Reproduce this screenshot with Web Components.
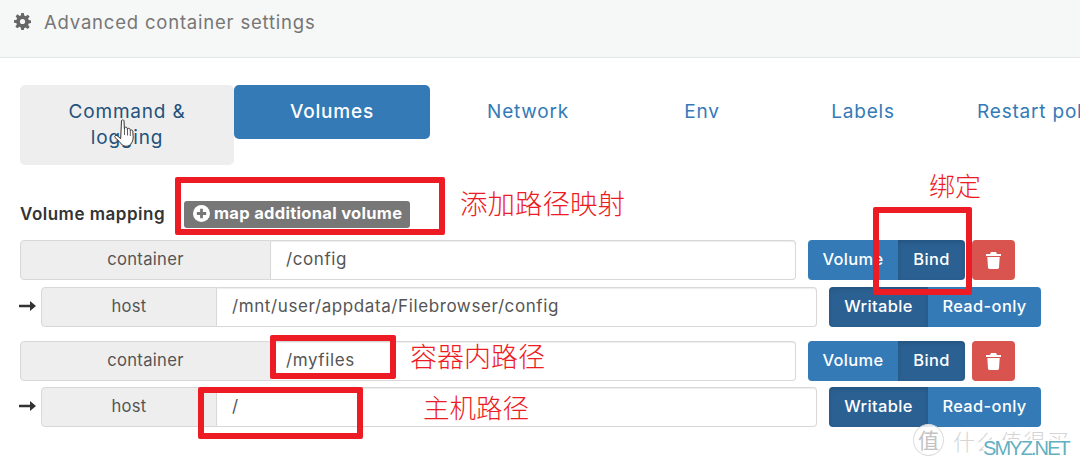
<!DOCTYPE html>
<html lang="en">
<head>
<meta charset="utf-8">
<title>Advanced container settings</title>
<style>
  html, body { margin: 0; padding: 0; background: #fff; overflow: hidden; height: 467px; }
  body { position: relative; font-family: Inter, "Noto Sans", sans-serif; }
</style>
</head>
<body>
<app-header>Advanced container settings</app-header>

<tab-bar>
  <nav-tab w="214" state="hover">Command &amp; logging</nav-tab>
  <nav-tab w="196" state="active">Volumes</nav-tab>
  <nav-tab w="196">Network</nav-tab>
  <nav-tab w="152">Env</nav-tab>
  <nav-tab w="170">Labels</nav-tab>
  <nav-tab w="132" state="clip">Restart policy</nav-tab>
</tab-bar>

<volume-toolbar>Volume mapping</volume-toolbar>

<volume-pair path="/config" host="/mnt/user/appdata/Filebrowser/config"></volume-pair>
<volume-pair path="/myfiles" host="/" gap="14" inner="6"></volume-pair>

<!-- anotaciones rojas encima de la captura -->
<red-box x="175" y="177" w="270" h="58"></red-box>
<red-box x="873" y="207" w="99" h="88"></red-box>
<red-box x="270" y="335" w="126" h="44"></red-box>
<red-box x="198" y="387" w="165" h="52"></red-box>
<red-note x="460" y="184" size="27.500">添加路径映射</red-note>
<red-note x="929" y="167" size="26">绑定</red-note>
<red-note x="410" y="338" size="27">容器内路径</red-note>
<red-note x="423" y="389" size="26.500">主机路径</red-note>

<hand-cursor></hand-cursor>
<site-mark></site-mark>

<script>
// Cabecera con el icono de engranaje
class AppHeader extends HTMLElement {
  constructor() {
    super();
    this.attachShadow({ mode: "open" });
  }
  connectedCallback() {
    this.shadowRoot.innerHTML = `
    <style>
      :host {
        display: flex; align-items: center; height: 43px; padding: 0 0 14px 14px;
        background: #f6f7f7; border-bottom: 1px solid #e6e9e9;
        gap: 13px; color: #767676; margin-bottom: 27px;
        font: 400 18.500px Inter, sans-serif; letter-spacing: .8px;
      }
      svg { width: 17px; height: 17px; flex: none; }
    </style>
    <svg viewBox="-1 -1 26 26"><path fill="#666" fill-rule="evenodd" d="M10 -1h4l.7 3.900 2.100.9 3.200-2.300 2.900 2.900-2.300 3.200.9 2.100 3.900.7v4l-3.900.7-.9 2.100 2.300 3.200-2.900 2.900-3.200-2.300-2.100.9L14 25h-4l-.7-3.900-2.100-.9-3.200 2.300-2.900-2.900 2.300-3.200-.9-2.100L-1 14v-4l3.900-.7.9-2.100-2.300-3.200 2.900-2.900 3.200 2.300 2.100-.9zM12 8a4 4 0 1 0 0 8 4 4 0 0 0 0-8z"/></svg>
    <slot></slot>`;
  }
}
customElements.define("app-header", AppHeader);

class TabBar extends HTMLElement {
  constructor() {
    super();
    this.attachShadow({ mode: "open" });
  }
  connectedCallback() {
    this.shadowRoot.innerHTML = `
    <style>
      :host { display: flex; align-items: flex-start; height: 80px; padding-left: 20px; overflow: hidden; }
    </style>
    <slot></slot>`;
  }
}
customElements.define("tab-bar", TabBar);

class NavTab extends HTMLElement {
  constructor() {
    super();
    this.attachShadow({ mode: "open" });
  }
  connectedCallback() {
    const w = this.getAttribute("w");
    this.shadowRoot.innerHTML = `
    <style>
      :host {
        display: block; flex: none; box-sizing: border-box; width: ${w}px;
        padding: 14px 20px; border-radius: 5px; text-align: center;
        font: 400 19px/26px Inter, sans-serif; letter-spacing: .8px; color: #337ab7;
      }
      :host([state="hover"]) { background: #eee; color: #23527c; padding-left: 40px; padding-right: 40px; }
      :host([state="active"]) { background: #337ab7; color: #fff; font-weight: 500; }
      :host([state="clip"]) { text-align: left; white-space: nowrap; padding: 14px 0 14px 29px; overflow: hidden; }
    </style>
    <slot></slot>`;
  }
}
customElements.define("nav-tab", NavTab);

class VolumeToolbar extends HTMLElement {
  constructor() {
    super();
    this.attachShadow({ mode: "open" });
  }
  connectedCallback() {
    this.shadowRoot.innerHTML = `
    <style>
      :host {
        display: flex; align-items: center; height: 27px;
        margin: 36px 0 12px 20px; color: #333;
        font: 600 17px Inter, sans-serif; letter-spacing: .5px;
      }
      .label { display: block; width: 164px; flex: none; padding-bottom: 2px; }
      .add {
        display: flex; align-items: center; gap: 4px; box-sizing: border-box;
        width: 226px; height: 27px; padding: 0 0 3px 9px;
        background: #777; color: #fff; border-radius: 3px;
        font: 700 16.500px Inter, sans-serif; letter-spacing: .3px; white-space: nowrap;
      }
      svg { width: 17px; height: 17px; flex: none; }
    </style>
    <span class="label"><slot></slot></span>
    <span class="add">
      <svg viewBox="0 0 16 16"><circle cx="8" cy="8" r="8" fill="#fff"/><path d="M3.600 8h8.800M8 3.600v8.800" stroke="#777" stroke-width="2.600"/></svg>
      map additional volume
    </span>`;
  }
}
customElements.define("volume-toolbar", VolumeToolbar);

// Dos filas: ruta del contenedor y ruta del host
class VolumePair extends HTMLElement {
  constructor() {
    super();
    this.attachShadow({ mode: "open" });
  }
  connectedCallback() {
    const path = this.getAttribute("path");
    const host = this.getAttribute("host");
    const gap = this.getAttribute("gap") || 0;
    const inner = this.getAttribute("inner") || 7;
    this.shadowRoot.innerHTML = `
    <style>
      :host { display: block; margin-top: ${gap}px; font: 400 16.600px Inter, sans-serif; letter-spacing: .3px; }
      .row { display: flex; align-items: stretch; height: 40px; padding-left: 20px; }
      .row + .row { margin-top: ${inner}px; padding-left: 0; }
      .arrow { width: 41px; display: flex; padding-left: 19px; box-sizing: border-box; align-items: center; }
      .arrow svg { width: 17px; height: 10px; margin-top: -2px; }
      .group { display: flex; box-sizing: border-box; width: 776px; flex: none; }
      .addon {
        display: flex; align-items: center; justify-content: center; flex: none; box-sizing: border-box;
        background: #eee; color: #555; border: 1px solid #d8d8d8; border-radius: 4px 0 0 4px; padding-bottom: 2px;
      }
      .c .addon { width: 251px; }
      .h .addon { width: 176px; }
      .val {
        flex: 1; display: flex; align-items: center; padding: 0 0 2px 15px; color: #555;
        font-size: 17px; letter-spacing: .6px;
        border: 1px solid #d8d8d8; border-left: 0; border-radius: 0 4px 4px 0; box-sizing: border-box;
        box-shadow: inset 0 1px 1px rgba(0,0,0,.075);
      }
      .toggle { display: flex; color: #fff; font-weight: 500; font-size: 16.400px; letter-spacing: .4px; margin-left: 12px; }
      .toggle span { display: flex; align-items: center; justify-content: center; background: #337ab7; padding-bottom: 2px; box-sizing: border-box; }
      .toggle span:first-child { border-radius: 4px 0 0 4px; }
      .toggle span:last-child { border-radius: 0 4px 4px 0; }
      .toggle .on { background: #2a6092; box-shadow: inset 0 2px 4px rgba(0,0,0,.13); }
      .del {
        display: flex; align-items: center; justify-content: center; width: 43px; margin-left: 7px;
        background: #d9534f; border-radius: 4px;
      }
      .del svg { width: 15px; height: 17px; }
    </style>
    <div class="row c">
      <div class="group"><span class="addon">container</span><span class="val">${path}</span></div>
      <div class="toggle"><span style="width:90px">Volume</span><span class="on" style="width:67px">Bind</span></div>
      <div class="del"><svg viewBox="0 0 15 17"><path fill="#fff" fill-rule="evenodd" d="M5 0h5l1 2h4v2H0V2h4zM1.300 5h12.400l-.7 10.600c0 .8-.6 1.400-1.400 1.400H3.400c-.8 0-1.400-.6-1.400-1.400z"/></svg></div>
    </div>
    <div class="row h">
      <div class="arrow"><svg viewBox="0 0 17 10"><path fill="#333" d="M0 3.800h11V0l6 5-6 5V6.200H0z"/></svg></div>
      <div class="group"><span class="addon">host</span><span class="val">${host}</span></div>
      <div class="toggle"><span class="on" style="width:99px">Writable</span><span style="width:113px">Read-only</span></div>
    </div>`;
  }
}
customElements.define("volume-pair", VolumePair);

class RedBox extends HTMLElement {
  constructor() {
    super();
    this.attachShadow({ mode: "open" });
  }
  connectedCallback() {
    const a = (n) => this.getAttribute(n);
    this.shadowRoot.innerHTML = `
    <style>
      :host {
        display: block; position: absolute; box-sizing: border-box;
        left: ${a("x")}px; top: ${a("y")}px; width: ${a("w")}px; height: ${a("h")}px;
        border: 6px solid #ed1c24; border-radius: 2px;
      }
    </style>`;
  }
}
customElements.define("red-box", RedBox);

class RedNote extends HTMLElement {
  constructor() {
    super();
    this.attachShadow({ mode: "open" });
  }
  connectedCallback() {
    const a = (n) => this.getAttribute(n);
    this.shadowRoot.innerHTML = `
    <style>
      :host {
        display: block; position: absolute; left: ${a("x")}px; top: ${a("y")}px;
        color: #ed1c24; white-space: nowrap;
        font: 300 ${a("size")}px/36px "Noto Sans CJK SC", sans-serif;
      }
    </style>
    <slot></slot>`;
  }
}
customElements.define("red-note", RedNote);

class HandCursor extends HTMLElement {
  constructor() {
    super();
    this.attachShadow({ mode: "open" });
  }
  connectedCallback() {
    this.shadowRoot.innerHTML = `
    <style>
      :host { display: block; position: absolute; left: 114px; top: 119px; width: 24px; height: 30px; }
    </style>
    <svg width="24" height="30" viewBox="0 0 24 30"><path fill="#fff" stroke="#333" stroke-width="1" stroke-linejoin="round" d="M7.500 1.500c.8-.8 2-.8 2.500.2l.4 8.300.3-1.400c.9-.8 2.100-.5 2.500.5l.2 1.400.3-.8c.9-.7 2-.4 2.400.6l.2 1.300.4-.4c.9-.5 1.900 0 2.100 1l.4 6c0 3-1 5-2.500 7-1.700 2.200-5 2.700-7.500 1.300-1.800-1-3-2.500-4.200-4.300L1 18.500c-.8-1.200.5-2.800 2-1.900l3.700 3z"/><path stroke="#333" fill="none" stroke-width=".8" d="M10.500 10v6M13.500 10.500v6M16.300 11.500v5.500"/></svg>`;
  }
}
customElements.define("hand-cursor", HandCursor);

// Marca de agua de la esquina
class SiteMark extends HTMLElement {
  constructor() {
    super();
    this.attachShadow({ mode: "open" });
  }
  connectedCallback() {
    this.shadowRoot.innerHTML = `
    <style>
      :host { display: block; position: absolute; left: 0; top: 0; width: 1080px; height: 467px; pointer-events: none; }
      .seal {
        position: absolute; left: 913px; top: 424px; width: 31px; height: 32px; box-sizing: border-box;
        border: 1px solid #dcdcdc; border-radius: 50%; background: rgba(255,255,255,.85); color: #c2c2c2;
        font: 400 21px/29px "Noto Sans CJK SC", sans-serif; text-align: center;
      }
      .cn {
        position: absolute; left: 953px; top: 425px; color: #d5d5d5; letter-spacing: 1.500px; white-space: nowrap;
        font: 300 22px/30px "Noto Sans CJK SC", sans-serif;
        clip-path: polygon(0 0, 100% 0, 100% 50%, 26% 50%, 26% 100%, 0 100%);
      }
      .en {
        position: absolute; left: 983px; top: 436px; color: #62b0c0; white-space: nowrap;
        font: 400 20px/24px "Liberation Sans", sans-serif; letter-spacing: -1.900px;
      }
    </style>
    <span class="seal">值</span><span class="cn">什么值得买</span><span class="en">SMYZ.NET</span>`;
  }
}
customElements.define("site-mark", SiteMark);
</script>
</body>
</html>
